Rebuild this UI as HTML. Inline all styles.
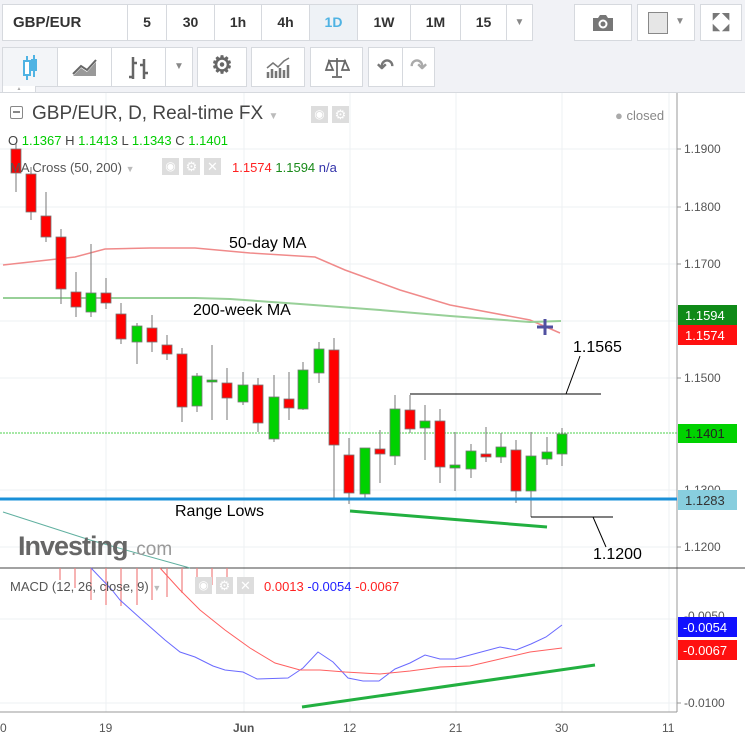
<!DOCTYPE html>
<html><head><meta charset="utf-8"><style>
*{margin:0;padding:0;box-sizing:border-box}
body{width:745px;height:740px;background:#f1f2f6;font-family:"Liberation Sans",sans-serif;position:relative;overflow:hidden}
.b{position:absolute;background:#fff;border:1px solid #d6d9de;color:#333;font-size:14px;font-weight:bold;text-align:center;line-height:33px}
.t{position:absolute;white-space:nowrap}
</style></head><body>
<!-- row 1 -->
<div class="b" style="left:2px;top:4px;width:126px;height:37px;text-align:left;padding-left:10px;line-height:35px;font-size:15px">GBP/EUR</div>
<div class="b" style="left:127px;top:4px;width:40px;height:37px;line-height:35px">5</div>
<div class="b" style="left:166px;top:4px;width:49px;height:37px;line-height:35px">30</div>
<div class="b" style="left:214px;top:4px;width:48px;height:37px;line-height:35px">1h</div>
<div class="b" style="left:261px;top:4px;width:49px;height:37px;line-height:35px">4h</div>
<div class="b" style="left:309px;top:4px;width:49px;height:37px;line-height:35px;background:#eef2f6;color:#4fb3e3">1D</div>
<div class="b" style="left:357px;top:4px;width:54px;height:37px;line-height:35px">1W</div>
<div class="b" style="left:410px;top:4px;width:51px;height:37px;line-height:35px">1M</div>
<div class="b" style="left:460px;top:4px;width:47px;height:37px;line-height:35px">15</div>
<div class="b" style="left:506px;top:4px;width:27px;height:37px;line-height:35px;color:#888;font-size:10px">▼</div>
<div class="b" style="left:574px;top:4px;width:58px;height:37px">
<svg width="26" height="20" style="margin-top:8px" viewBox="0 0 26 20"><path d="M3 5h5l2-3h6l2 3h5v13H3z" fill="#777"/><circle cx="13" cy="11" r="4.5" fill="#fff"/><circle cx="13" cy="11" r="2.5" fill="#777"/></svg></div>
<div class="b" style="left:637px;top:4px;width:58px;height:37px"><div style="position:absolute;left:10px;top:7px;width:20px;height:22px;background:#e6e6e6;border:1px solid #888"></div><span style="position:absolute;left:37px;top:0;font-size:10px;color:#888">▼</span></div>
<div class="b" style="left:700px;top:4px;width:42px;height:37px;color:#777;font-size:9px;line-height:11px;padding-top:6px">◤ ◥<br>◣ ◢</div>
<!-- row 2 -->
<div class="b" style="left:2px;top:47px;width:56px;height:40px;background:#f3f5f8"><svg width="20" height="30" style="margin-top:5px"><line x1="7" y1="3" x2="7" y2="27" stroke="#4fb3e3" stroke-width="2"/><rect x="4" y="8" width="6" height="14" fill="#fff" stroke="#4fb3e3" stroke-width="2"/><line x1="14" y1="2" x2="14" y2="24" stroke="#4fb3e3" stroke-width="2"/><rect x="11" y="6" width="6" height="12" fill="#4fb3e3"/></svg></div>
<div class="b" style="left:57px;top:47px;width:55px;height:40px"><svg width="26" height="20" style="margin-top:10px"><path d="M1 18L9 10l6 4 9-10v14z" fill="#999"/><path d="M1 16L9 8l6 4 9-10" stroke="#666" stroke-width="2" fill="none"/></svg></div>
<div class="b" style="left:111px;top:47px;width:55px;height:40px"><svg width="24" height="26" style="margin-top:7px"><path d="M6 2v22M2 22h4M6 8h4M17 4v20M13 10h4M17 18h4" stroke="#666" stroke-width="2.5" fill="none"/></svg></div>
<div class="b" style="left:165px;top:47px;width:28px;height:40px;color:#888;font-size:10px;line-height:38px">▼</div>
<div class="b" style="left:197px;top:47px;width:50px;height:40px;color:#666;font-size:24px;line-height:36px">⚙</div>
<div class="b" style="left:251px;top:47px;width:54px;height:40px"><svg width="26" height="24" style="margin-top:8px"><path d="M3 22v-6M7 22v-9M11 22v-7M15 22v-10M19 22v-8M23 22v-13" stroke="#777" stroke-width="2.5"/><path d="M2 12l6-5 5 4 6-6 5-3" stroke="#777" stroke-width="1.5" fill="none"/></svg></div>
<div class="b" style="left:310px;top:47px;width:53px;height:40px"><svg width="26" height="24" style="margin-top:8px"><path d="M13 2v18M4 5h18M5 5l-3 9h7zM21 5l-3 9h7zM8 21h10" stroke="#666" stroke-width="1.7" fill="none"/></svg></div>
<div class="b" style="left:368px;top:47px;width:35px;height:40px;color:#777;font-size:20px;line-height:38px">↶</div>
<div class="b" style="left:402px;top:47px;width:33px;height:40px;color:#aaa;font-size:20px;line-height:38px">↷</div>
<div style="position:absolute;left:2px;top:86px;width:34px;height:8px;background:#fff;border:1px solid #d6d9de;border-top:none;font-size:5px;color:#aaa;text-align:center;line-height:6px">▲</div>
<!-- chart -->
<svg width="745" height="648" style="position:absolute;left:0;top:92px" viewBox="0 92 745 648">
<rect x="0" y="92" width="745" height="648" fill="#fff"/>
<rect x="0" y="92" width="745" height="1" fill="#d6d9de"/>
<g stroke="#eef0f3" stroke-width="1">
<line x1="106" y1="93" x2="106" y2="712"/><line x1="244" y1="93" x2="244" y2="712"/><line x1="350" y1="93" x2="350" y2="712"/><line x1="456" y1="93" x2="456" y2="712"/><line x1="562" y1="93" x2="562" y2="712"/><line x1="669" y1="93" x2="669" y2="712"/>
<line x1="0" y1="149" x2="677" y2="149"/><line x1="0" y1="207" x2="677" y2="207"/><line x1="0" y1="264" x2="677" y2="264"/><line x1="0" y1="321" x2="677" y2="321"/><line x1="0" y1="378" x2="677" y2="378"/><line x1="0" y1="490" x2="677" y2="490"/><line x1="0" y1="547" x2="677" y2="547"/>
<line x1="0" y1="619" x2="677" y2="619"/><line x1="0" y1="703" x2="677" y2="703"/>
</g>
<line x1="677" y1="93" x2="677" y2="712" stroke="#999"/>
<line x1="0" y1="712" x2="677" y2="712" stroke="#999"/>
<line x1="0" y1="568" x2="745" y2="568" stroke="#444"/>
<line x1="0" y1="433" x2="677" y2="433" stroke="#4cd04c" stroke-dasharray="2,1"/>
<!-- MA lines -->
<polyline points="3,265 75,257 105,249 150,248 195,248 250,253 315,257 345,270 400,290 450,305 530,320 560,333" fill="none" stroke="#f08a8a" stroke-width="1.5"/>
<polyline points="3,298 195,298 230,299 300,304 380,310 450,316 530,322 561,321" fill="none" stroke="#98d098" stroke-width="2"/>
<path d="M545 319v16M537 327h16" stroke="#5050a0" stroke-width="3"/>
<polyline points="3,512 90,540 190,568" fill="none" stroke="#60b0a0" stroke-width="1"/>
<!-- candles -->
<g stroke="#777" stroke-width="1">
<line x1="16" y1="143" x2="16" y2="192"/><line x1="31" y1="167" x2="31" y2="220"/><line x1="46" y1="192" x2="46" y2="242"/><line x1="61" y1="229" x2="61" y2="304"/><line x1="76" y1="272" x2="76" y2="317"/><line x1="91" y1="244" x2="91" y2="317"/><line x1="106" y1="278" x2="106" y2="309"/><line x1="121" y1="303" x2="121" y2="344"/><line x1="137" y1="323" x2="137" y2="364"/><line x1="152" y1="315" x2="152" y2="352"/><line x1="167" y1="335" x2="167" y2="360"/><line x1="182" y1="348" x2="182" y2="422"/><line x1="197" y1="373" x2="197" y2="412"/><line x1="212" y1="345" x2="212" y2="420"/><line x1="227" y1="368" x2="227" y2="420"/><line x1="243" y1="372" x2="243" y2="405"/><line x1="258" y1="378" x2="258" y2="432"/><line x1="274" y1="375" x2="274" y2="442"/><line x1="289" y1="372" x2="289" y2="420"/><line x1="303" y1="362" x2="303" y2="410"/><line x1="319" y1="342" x2="319" y2="383"/><line x1="334" y1="338" x2="334" y2="500"/><line x1="349" y1="438" x2="349" y2="504"/><line x1="365" y1="448" x2="365" y2="498"/><line x1="380" y1="430" x2="380" y2="483"/><line x1="395" y1="395" x2="395" y2="465"/><line x1="410" y1="395" x2="410" y2="433"/><line x1="425" y1="405" x2="425" y2="460"/><line x1="440" y1="409" x2="440" y2="483"/><line x1="455" y1="432" x2="455" y2="491"/><line x1="471" y1="444" x2="471" y2="478"/><line x1="486" y1="427" x2="486" y2="462"/><line x1="501" y1="433" x2="501" y2="463"/><line x1="516" y1="440" x2="516" y2="503"/><line x1="531" y1="432" x2="531" y2="517"/><line x1="547" y1="437" x2="547" y2="465"/><line x1="562" y1="428" x2="562" y2="466"/>
</g>
<g stroke="#777" stroke-width="0.8">
<g fill="#ff0000">
<rect x="11" y="149" width="10" height="24"/><rect x="26" y="174" width="10" height="38"/><rect x="41" y="216" width="10" height="21"/><rect x="56" y="237" width="10" height="52"/><rect x="71" y="292" width="10" height="15"/><rect x="101" y="293" width="10" height="10"/><rect x="116" y="314" width="10" height="25"/><rect x="147" y="328" width="10" height="14"/><rect x="162" y="345" width="10" height="9"/><rect x="177" y="354" width="10" height="53"/><rect x="222" y="383" width="10" height="15"/><rect x="253" y="385" width="10" height="38"/><rect x="284" y="399" width="10" height="9"/><rect x="329" y="350" width="10" height="95"/><rect x="344" y="455" width="10" height="38"/><rect x="375" y="449" width="10" height="5"/><rect x="405" y="410" width="10" height="19"/><rect x="435" y="421" width="10" height="46"/><rect x="481" y="454" width="10" height="3"/><rect x="511" y="450" width="10" height="41"/>
</g>
<g fill="#00d200">
<rect x="86" y="293" width="10" height="19"/><rect x="132" y="326" width="10" height="16"/><rect x="192" y="376" width="10" height="30"/><rect x="207" y="380" width="10" height="2"/><rect x="238" y="385" width="10" height="17"/><rect x="269" y="397" width="10" height="42"/><rect x="298" y="370" width="10" height="39"/><rect x="314" y="349" width="10" height="24"/><rect x="360" y="448" width="10" height="46"/><rect x="390" y="409" width="10" height="47"/><rect x="420" y="421" width="10" height="7"/><rect x="450" y="465" width="10" height="3"/><rect x="466" y="451" width="10" height="18"/><rect x="496" y="447" width="10" height="10"/><rect x="526" y="456" width="10" height="35"/><rect x="542" y="452" width="10" height="7"/><rect x="557" y="434" width="10" height="20"/>
</g></g>
<!-- annotations -->
<line x1="0" y1="499" x2="677" y2="499" stroke="#1a90d8" stroke-width="3"/>
<line x1="350" y1="511" x2="547" y2="527" stroke="#22b040" stroke-width="3"/>
<path d="M410 394H601M566 394L580 356M531 517H613M593 517L606 547" stroke="#000" stroke-width="1" fill="none"/>
<g font-family="Liberation Sans,sans-serif" font-size="16" fill="#000">
<text x="229" y="248">50-day MA</text><text x="193" y="315">200-week MA</text><text x="573" y="352">1.1565</text><text x="175" y="516">Range Lows</text><text x="593" y="559">1.1200</text></g>
<text x="18" y="555" font-size="27" font-weight="bold" fill="#666" letter-spacing="-1">Investing</text><text x="131" y="555" font-size="19" fill="#999">.com</text>
<!-- MACD -->
<g stroke="#f08080" stroke-width="1.2"><line x1="60" y1="568" x2="60" y2="580"/><line x1="75" y1="568" x2="75" y2="588"/><line x1="91" y1="568" x2="91" y2="600"/><line x1="106" y1="568" x2="106" y2="605"/><line x1="121" y1="568" x2="121" y2="606"/><line x1="137" y1="568" x2="137" y2="605"/><line x1="152" y1="568" x2="152" y2="600"/><line x1="167" y1="568" x2="167" y2="597"/><line x1="182" y1="568" x2="182" y2="593"/><line x1="197" y1="568" x2="197" y2="590"/><line x1="212" y1="568" x2="212" y2="585"/><line x1="227" y1="568" x2="227" y2="577"/></g>
<polyline points="91,568 112,590 120,600 140,618 165,640 180,652 195,657 213,666 225,670 243,672 257,679 288,678 303,668 318,652 333,662 348,678 363,681 379,681 395,669 410,663 425,655 440,659 455,659 470,655 485,651 500,647 516,650 531,644 546,637 562,625" fill="none" stroke="#6a6aff" stroke-width="1"/>
<polyline points="160,568 180,590 200,610 225,630 250,648 275,663 300,670 320,670 345,672 380,674 410,671 440,667 470,666 500,659 530,652 562,648" fill="none" stroke="#ff6060" stroke-width="1"/>
<line x1="302" y1="707" x2="595" y2="665" stroke="#22b040" stroke-width="3"/>
<!-- axis labels -->
<g font-size="12" fill="#555">
<text x="684" y="153">1.1900</text><text x="684" y="211">1.1800</text><text x="684" y="268">1.1700</text><text x="684" y="382">1.1500</text><text x="684" y="494">1.1300</text><text x="684" y="551">1.1200</text><text x="684" y="707">-0.0100</text><text x="684" y="620">-0.0050</text>
<text x="0" y="732">0</text><text x="99" y="732">19</text><text x="233" y="732" font-weight="bold">Jun</text><text x="343" y="732">12</text><text x="449" y="732">21</text><text x="555" y="732">30</text><text x="662" y="732">11</text></g>
<g stroke="#999"><path d="M677 149h4M677 207h4M677 264h4M677 378h4M677 547h4M677 703h4"/></g>
<rect x="678" y="305" width="59" height="20" fill="#0f8a18"/><text x="685" y="320" font-size="13" fill="#fff">1.1594</text>
<rect x="678" y="325" width="59" height="20" fill="#ff1010"/><text x="685" y="340" font-size="13" fill="#fff">1.1574</text>
<rect x="678" y="424" width="59" height="19" fill="#00d200"/><text x="685" y="438" font-size="13" fill="#222">1.1401</text>
<rect x="678" y="490" width="59" height="20" fill="#88cede"/><text x="685" y="505" font-size="13" fill="#333">1.1283</text>
<rect x="678" y="617" width="59" height="20" fill="#1010ff"/><text x="683" y="632" font-size="13" fill="#fff">-0.0054</text>
<rect x="678" y="640" width="59" height="20" fill="#ff1010"/><text x="683" y="655" font-size="13" fill="#fff">-0.0067</text>
</svg>
<!-- header texts -->
<div class="t" style="left:10px;top:106px;width:13px;height:13px;border:1.5px solid #888;border-radius:2px"><div style="margin:4px 2px;height:1.5px;background:#888"></div></div>
<div class="t" style="left:32px;top:103px;font-size:19px;color:#444">GBP/EUR, D, Real-time FX <span style="font-size:10px;color:#bbb">▼</span></div>
<div class="t" style="left:311px;top:106px;width:17px;height:17px;background:#ddd;color:#fff;font-size:12px;text-align:center;line-height:17px">◉</div>
<div class="t" style="left:332px;top:106px;width:17px;height:17px;background:#ddd;color:#fff;font-size:13px;text-align:center;line-height:17px">⚙</div>
<div class="t" style="left:615px;top:108px;font-size:13px;color:#888"><span style="color:#aaa">●</span> closed</div>
<div class="t" style="left:8px;top:133px;font-size:13px;color:#444">O <span style="color:#0c0">1.1367</span> H <span style="color:#0c0">1.1413</span> L <span style="color:#0c0">1.1343</span> C <span style="color:#0c0">1.1401</span></div>
<div class="t" style="left:10px;top:160px;font-size:13px;color:#555">MA Cross (50, 200) <span style="font-size:9px;color:#bbb">▼</span></div>
<div class="t" style="left:162px;top:158px;width:17px;height:17px;background:#ddd;color:#fff;font-size:12px;text-align:center;line-height:17px">◉</div>
<div class="t" style="left:183px;top:158px;width:17px;height:17px;background:#ddd;color:#fff;font-size:13px;text-align:center;line-height:17px">⚙</div>
<div class="t" style="left:204px;top:158px;width:17px;height:17px;background:#ddd;color:#fff;font-size:13px;text-align:center;line-height:17px">✕</div>
<div class="t" style="left:232px;top:160px;font-size:13px"><span style="color:#f22">1.1574</span> <span style="color:#1a8a1a">1.1594</span> <span style="color:#33a">n/a</span></div>
<div class="t" style="left:10px;top:579px;font-size:13px;color:#555">MACD (12, 26, close, 9) <span style="font-size:9px;color:#bbb">▼</span></div>
<div class="t" style="left:195px;top:577px;width:17px;height:17px;background:#ddd;color:#fff;font-size:12px;text-align:center;line-height:17px">◉</div>
<div class="t" style="left:216px;top:577px;width:17px;height:17px;background:#ddd;color:#fff;font-size:13px;text-align:center;line-height:17px">⚙</div>
<div class="t" style="left:237px;top:577px;width:17px;height:17px;background:#ddd;color:#fff;font-size:13px;text-align:center;line-height:17px">✕</div>
<div class="t" style="left:264px;top:579px;font-size:13px"><span style="color:#f22">0.0013</span> <span style="color:#22f">-0.0054</span> <span style="color:#f22">-0.0067</span></div>
</body></html>
